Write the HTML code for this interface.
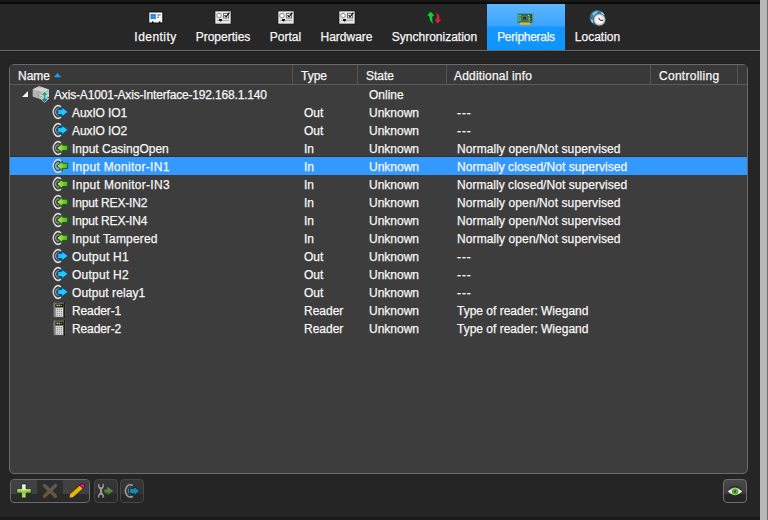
<!DOCTYPE html>
<html><head><meta charset="utf-8">
<style>
html,body{margin:0;padding:0;}
body{width:768px;height:520px;overflow:hidden;position:relative;background:#252525;font-family:"Liberation Sans",sans-serif;font-size:12px;color:#f6f6f6;-webkit-text-stroke:0.25px #f6f6f6;}
.abs{position:absolute;}
#topstrip{position:absolute;left:0;top:0;width:760px;height:4px;background:linear-gradient(#1e1e1e,#050505);}
#tabbar{position:absolute;left:0;top:4px;width:760px;height:46px;background:#272727;}
#tabline{position:absolute;left:0;top:50px;width:760px;height:1px;background:#6a6a6a;}
#tabline2{position:absolute;left:0;top:51px;width:760px;height:1px;background:#1f1f1f;}
#rstrip{position:absolute;left:760px;top:0;width:7px;height:520px;background:#b8b8b8;}
#rstrip2{position:absolute;left:767px;top:0;width:1px;height:520px;background:#6e6e6e;}
#bstrip{position:absolute;left:0;top:517px;width:760px;height:3px;background:#1a1a1a;}
.tab{position:absolute;top:4px;height:46px;}
.tsel{background:linear-gradient(#5db6ff 0px,#3aa4ff 22px,#1496ff 23px,#0f95ff 46px);}
.tic{position:absolute;left:50%;margin-left:-9px;top:5px;overflow:visible;}
.tl{position:absolute;left:0;right:0;top:24px;line-height:18px;text-align:center;white-space:nowrap;}
#panel{position:absolute;left:9px;top:64px;width:737px;height:408px;border:1px solid #6a6a6a;border-radius:5px;background:#3d3d3d;overflow:hidden;}
#panelshadow{position:absolute;left:9px;top:63px;width:739px;height:1px;background:#1f1f1f;}
#hdr{position:absolute;left:10px;top:65px;width:737px;height:19px;background:#393939;}
#hdrline{position:absolute;left:10px;top:84px;width:737px;height:1px;background:#5a5a5a;}
.sep{position:absolute;top:65px;width:1px;height:19px;background:#555;}
.t{position:absolute;line-height:18px;white-space:nowrap;}
.row{position:absolute;left:10px;width:737px;height:18px;}
.row.sel{background:#3399ff;box-shadow:0 -1px 0 #33302c;}
.ic{position:absolute;overflow:visible;}
.tri{position:absolute;left:22px;width:0;height:0;border-left:6px solid transparent;border-bottom:6px solid #f4f4f4;}
.btn{position:absolute;top:479px;width:22px;height:22px;border:1px solid #474747;border-radius:4px;background:linear-gradient(#363636 0,#333 14px,#292929 14px,#292929 22px);}
</style></head><body>
<svg width="0" height="0" style="position:absolute">
<defs>
  <linearGradient id="gBlue" x1="0" y1="0" x2="1" y2="1"><stop offset="0" stop-color="#10b8e8"/><stop offset="1" stop-color="#30dcf8"/></linearGradient>
  <linearGradient id="gGreen" x1="0" y1="0" x2="1" y2="0"><stop offset="0" stop-color="#c4ec60"/><stop offset="1" stop-color="#4cb024"/></linearGradient>
  <g id="i-c">
    <path d="M9.9 3 A4.51 6.3 0 1 0 9.9 13" fill="none" stroke="#dadada" stroke-width="1.8"/>
    <path d="M9.1 4.6 A3.3 4.6 0 1 0 9.1 11.4" fill="none" stroke="#484848" stroke-width="1.1"/>
    <path d="M8.6 5.8 A2.3 3.2 0 1 0 8.6 10.2" fill="none" stroke="#b8b8b8" stroke-width="0.9"/>
  </g>
  <g id="i-out">
    
    <path d="M9.9 3 A4.51 6.3 0 1 0 9.9 13" fill="none" stroke="#dadada" stroke-width="1.8"/>
    <path d="M9.1 4.6 A3.3 4.6 0 1 0 9.1 11.4" fill="none" stroke="#484848" stroke-width="1.1"/>
    <path d="M8.6 5.8 A2.3 3.2 0 1 0 8.6 10.2" fill="none" stroke="#b8b8b8" stroke-width="0.9"/>
  
    <path d="M6.7 5.4 H10.9 V3.1 L16.9 7.9 L10.9 12.7 V10.5 H6.7 Z" fill="url(#gBlue)" stroke="#0a4aa0" stroke-width="1" stroke-linejoin="round"/>
  </g>
  <g id="i-in">
    
    <path d="M9.9 3 A4.51 6.3 0 1 0 9.9 13" fill="none" stroke="#dadada" stroke-width="1.8"/>
    <path d="M9.1 4.6 A3.3 4.6 0 1 0 9.1 11.4" fill="none" stroke="#484848" stroke-width="1.1"/>
    <path d="M8.6 5.8 A2.3 3.2 0 1 0 8.6 10.2" fill="none" stroke="#b8b8b8" stroke-width="0.9"/>
  
    <path d="M16.7 5.2 H11.5 V3.2 L5.8 7.95 L11.5 12.7 V10.4 H16.7 Z" fill="url(#gGreen)" stroke="#1e6010" stroke-width="1" stroke-linejoin="round"/>
  </g>
  <g id="i-rdr">
    <linearGradient id="gRb" x1="0" y1="0" x2="1" y2="0"><stop offset="0" stop-color="#8a8a8a"/><stop offset=".3" stop-color="#5a5a5a"/><stop offset="1" stop-color="#6a6a6a"/></linearGradient>
    <rect x="2.6" y="0.6" width="10.6" height="14.6" rx="0.8" fill="url(#gRb)"/>
    <rect x="12.8" y="0.4" width="1.3" height="15" fill="#151515"/>
    <path d="M14.3 1.4 V14" stroke="#707070" stroke-width="0.5"/>
    <rect x="4.4" y="2.2" width="8" height="2.6" fill="#0c0c0c"/>
    <g fill="#90e040"><ellipse cx="6.2" cy="3.4" rx="1" ry=".8"/><ellipse cx="8.3" cy="3.4" rx="1" ry=".8"/><ellipse cx="10.4" cy="3.4" rx=".9" ry=".7" fill="#60a030"/></g>
    <rect x="4.6" y="5.8" width="7.4" height="9" fill="#dadada"/>
    <g fill="#8a8a8a"><circle cx="6.2" cy="7.4" r=".65"/><circle cx="8.3" cy="7.4" r=".65"/><circle cx="10.4" cy="7.4" r=".65"/>
    <circle cx="6.2" cy="9.4" r=".65"/><circle cx="8.3" cy="9.4" r=".65"/><circle cx="10.4" cy="9.4" r=".65"/>
    <circle cx="6.2" cy="11.4" r=".65"/><circle cx="8.3" cy="11.4" r=".65"/><circle cx="10.4" cy="11.4" r=".65"/>
    <circle cx="6.2" cy="13.4" r=".65"/><circle cx="8.3" cy="13.4" r=".65"/><circle cx="10.4" cy="13.4" r=".65"/></g>
  </g>
  <g id="i-dev">
    <linearGradient id="gDA" x1="0" y1="0" x2="0" y2="1"><stop offset="0" stop-color="#10a040"/><stop offset=".5" stop-color="#38b0a0"/><stop offset="1" stop-color="#0848b0"/></linearGradient>
    <path d="M0.8 3.2 L7 0.2 L17 3.4 L17 10.8 L10.6 13.8 L0.8 10.4 Z" fill="#a8a8a8"/>
    <path d="M0.8 3.2 L7 0.2 L17 3.4 L10.6 6.4 Z" fill="#d4d4d4"/>
    <path d="M10.6 6.4 L17 3.4 L17 10.8 L10.6 13.8 Z" fill="#c0c0c0"/>
    <path d="M0.8 3.2 L10.6 6.4 L10.6 13.8 L0.8 10.4 Z" fill="#b4b4b4"/>
    <path d="M4.4 2.2 L10.4 0.9" stroke="#9a9a9a" stroke-width="0.5"/>
    <path d="M6.2 4.8 L6.2 12" stroke="#989898" stroke-width="0.6"/>
    <path d="M12.6 5.4 L16.8 9.4 L14 9.4 L14 12.4 L16.8 12.4 L12.6 16.4 L8.4 12.4 L11.2 12.4 L11.2 9.4 L8.4 9.4 Z" fill="url(#gDA)" stroke="#f0f0f0" stroke-width="0.7" stroke-linejoin="round"/>
  </g>
  <g id="i-prop">
    <rect x="1" y="2" width="16" height="13" fill="#e6e6e6" stroke="#111" stroke-width="0.6"/>
    <circle cx="5" cy="6.6" r="2.3" fill="#f8f8f8" stroke="#808080" stroke-width="0.9"/>
    <rect x="9.6" y="4.4" width="5" height="4.6" fill="#f4f4f4" stroke="#555" stroke-width="0.8"/>
    <path d="M10.6 6.2 L12 7.8 L15.4 3.6" fill="none" stroke="#111" stroke-width="1.2"/>
    <path d="M3 11.4 H15" stroke="#999" stroke-width="0.9"/>
    <path d="M5 10 H8 V11.4 L6.5 12.8 L5 11.4 Z" fill="#111"/>
  </g>
  <g id="i-id">
    <path d="M1.8 3 H15.8 V14 H13.6 L12.6 12.8 L11.6 14 H6.6 L5.6 12.8 L4.6 14 H1.8 Z" fill="#f6f6f6" stroke="#0a0a0a" stroke-width="0.9"/>
    <rect x="3.6" y="5" width="5.2" height="5" fill="#1a84e0"/>
    <path d="M3.6 7.5 H8.8 M6.2 5 V10" stroke="#5aa8f0" stroke-width="0.4"/>
    <path d="M10.2 6 H13.6 M10.2 8.2 H12" stroke="#333" stroke-width="0.8"/>
    <path d="M5.6 12.4 V14.4 M12.6 12.4 V14.4" stroke="#111" stroke-width="1.2"/>
  </g>
  <g id="i-sync">
    <path d="M4.6 2.8 L1.2 6.6 L3.2 6.9 L3.9 11 L6.8 15 L6.2 9.8 L6.6 6.9 L8.4 6.6 Z" fill="#10d030"/>
    <path d="M9.8 2.8 L11.2 7.2 L9.8 10.8 L8.8 11 L11.6 14.6 L15.2 10.8 L13.4 10.6 L13.2 6.6 Z" fill="#d81e34"/>
  </g>
  <g id="i-per">
    <rect x="0.6" y="5" width="14.6" height="8.4" fill="#2a7a42" stroke="#1a4a28" stroke-width="0.5"/>
    <rect x="0.4" y="5" width="1.2" height="8.4" fill="#48c0c0"/>
    <rect x="5.4" y="7.2" width="4.4" height="3.8" fill="#3a3434" stroke="#8a8a8a" stroke-width="0.5"/>
    <g fill="#e8e8e8"><rect x="2.4" y="6.2" width="1.2" height="1"/><rect x="2.4" y="8.4" width="1.2" height="1"/><rect x="2.4" y="10.6" width="1.2" height="1"/><rect x="11" y="6.2" width="1.2" height="1"/><rect x="11.6" y="8.8" width="1.2" height="1"/><rect x="11.6" y="10.6" width="1.2" height="1"/></g>
    <g fill="#1a3a20"><rect x="13.6" y="6" width="1.2" height="1.2"/><rect x="13.6" y="8" width="1.2" height="1.2"/><rect x="13.6" y="10" width="1.2" height="1.2"/></g>
    <rect x="3" y="13.4" width="10" height="2.4" fill="#f0b020"/>
    <path d="M16 16 V4.4 L17 3.4" fill="none" stroke="#8a8a8a" stroke-width="1.1"/>
  </g>
  <g id="i-loc">
    <radialGradient id="gGlobe" cx=".4" cy=".35" r=".65"><stop offset="0" stop-color="#5aa0c0"/><stop offset=".55" stop-color="#24709a"/><stop offset="1" stop-color="#103a68"/></radialGradient>
    <radialGradient id="gClock" cx=".45" cy=".45" r=".6"><stop offset="0" stop-color="#ffffff"/><stop offset=".7" stop-color="#eeeeee"/><stop offset="1" stop-color="#a8a8a8"/></radialGradient>
    <circle cx="8.55" cy="8.95" r="7.9" fill="url(#gGlobe)"/>
    <path d="M3 5 Q5.4 2 9.4 2 Q8 4 4.6 6.4 Z" fill="#a8d0e0" opacity=".8"/>
    <path d="M11.6 2.4 Q14.6 3.6 15.6 6.2 L12.6 5.4 Z" fill="#c0e4d8"/>
    <path d="M1.4 10 Q2 13 4.4 14.6 L4.2 11 Z" fill="#a0d0b0"/>
    <circle cx="10.5" cy="10.8" r="6" fill="#cfcfcf" stroke="#4a4a4a" stroke-width="0.6"/>
    <circle cx="10.7" cy="11" r="4.9" fill="url(#gClock)"/>
    <path d="M9.6 8.8 L11 11.2 L14.2 11.4" fill="none" stroke="#111" stroke-width="0.9"/>
  </g>
</defs>
</svg>
<div id="topstrip"></div>
<div id="tabbar"></div>
<div class="tab" style="left:125px;width:61px"><svg class="tic" width="18" height="16" viewBox="0 0 18 16">
    <path d="M1.8 3 H15.8 V14 H13.6 L12.6 12.8 L11.6 14 H6.6 L5.6 12.8 L4.6 14 H1.8 Z" fill="#f6f6f6" stroke="#0a0a0a" stroke-width="0.9"/>
    <rect x="3.6" y="5" width="5.2" height="5" fill="#1a84e0"/>
    <path d="M3.6 7.5 H8.8 M6.2 5 V10" stroke="#5aa8f0" stroke-width="0.4"/>
    <path d="M10.2 6 H13.6 M10.2 8.2 H12" stroke="#333" stroke-width="0.8"/>
    <path d="M5.6 12.4 V14.4 M12.6 12.4 V14.4" stroke="#111" stroke-width="1.2"/>
  </svg><div class="tl" style="letter-spacing:0.45px">Identity</div></div>
<div class="tab" style="left:186px;width:74px"><svg class="tic" width="18" height="16" viewBox="0 0 18 16">
    <rect x="1" y="2" width="16" height="13" fill="#e6e6e6" stroke="#111" stroke-width="0.6"/>
    <circle cx="5" cy="6.6" r="2.3" fill="#f8f8f8" stroke="#808080" stroke-width="0.9"/>
    <rect x="9.6" y="4.4" width="5" height="4.6" fill="#f4f4f4" stroke="#555" stroke-width="0.8"/>
    <path d="M10.6 6.2 L12 7.8 L15.4 3.6" fill="none" stroke="#111" stroke-width="1.2"/>
    <path d="M3 11.4 H15" stroke="#999" stroke-width="0.9"/>
    <path d="M5 10 H8 V11.4 L6.5 12.8 L5 11.4 Z" fill="#111"/>
  </svg><div class="tl">Properties</div></div>
<div class="tab" style="left:260px;width:51px"><svg class="tic" width="18" height="16" viewBox="0 0 18 16">
    <rect x="1" y="2" width="16" height="13" fill="#e6e6e6" stroke="#111" stroke-width="0.6"/>
    <circle cx="5" cy="6.6" r="2.3" fill="#f8f8f8" stroke="#808080" stroke-width="0.9"/>
    <rect x="9.6" y="4.4" width="5" height="4.6" fill="#f4f4f4" stroke="#555" stroke-width="0.8"/>
    <path d="M10.6 6.2 L12 7.8 L15.4 3.6" fill="none" stroke="#111" stroke-width="1.2"/>
    <path d="M3 11.4 H15" stroke="#999" stroke-width="0.9"/>
    <path d="M5 10 H8 V11.4 L6.5 12.8 L5 11.4 Z" fill="#111"/>
  </svg><div class="tl">Portal</div></div>
<div class="tab" style="left:311px;width:71px"><svg class="tic" width="18" height="16" viewBox="0 0 18 16">
    <rect x="1" y="2" width="16" height="13" fill="#e6e6e6" stroke="#111" stroke-width="0.6"/>
    <circle cx="5" cy="6.6" r="2.3" fill="#f8f8f8" stroke="#808080" stroke-width="0.9"/>
    <rect x="9.6" y="4.4" width="5" height="4.6" fill="#f4f4f4" stroke="#555" stroke-width="0.8"/>
    <path d="M10.6 6.2 L12 7.8 L15.4 3.6" fill="none" stroke="#111" stroke-width="1.2"/>
    <path d="M3 11.4 H15" stroke="#999" stroke-width="0.9"/>
    <path d="M5 10 H8 V11.4 L6.5 12.8 L5 11.4 Z" fill="#111"/>
  </svg><div class="tl">Hardware</div></div>
<div class="tab" style="left:382px;width:105px"><svg class="tic" width="18" height="16" viewBox="0 0 18 16">
    <path d="M4.6 2.8 L1.2 6.6 L3.2 6.9 L3.9 11 L6.8 15 L6.2 9.8 L6.6 6.9 L8.4 6.6 Z" fill="#10d030"/>
    <path d="M9.8 2.8 L11.2 7.2 L9.8 10.8 L8.8 11 L11.6 14.6 L15.2 10.8 L13.4 10.6 L13.2 6.6 Z" fill="#d81e34"/>
  </svg><div class="tl">Synchronization</div></div>
<div class="tab tsel" style="left:487px;width:78px"><svg class="tic" width="18" height="16" viewBox="0 0 18 16">
    <rect x="0.6" y="5" width="14.6" height="8.4" fill="#2a7a42" stroke="#1a4a28" stroke-width="0.5"/>
    <rect x="0.4" y="5" width="1.2" height="8.4" fill="#48c0c0"/>
    <rect x="5.4" y="7.2" width="4.4" height="3.8" fill="#3a3434" stroke="#8a8a8a" stroke-width="0.5"/>
    <g fill="#e8e8e8"><rect x="2.4" y="6.2" width="1.2" height="1"/><rect x="2.4" y="8.4" width="1.2" height="1"/><rect x="2.4" y="10.6" width="1.2" height="1"/><rect x="11" y="6.2" width="1.2" height="1"/><rect x="11.6" y="8.8" width="1.2" height="1"/><rect x="11.6" y="10.6" width="1.2" height="1"/></g>
    <g fill="#1a3a20"><rect x="13.6" y="6" width="1.2" height="1.2"/><rect x="13.6" y="8" width="1.2" height="1.2"/><rect x="13.6" y="10" width="1.2" height="1.2"/></g>
    <rect x="3" y="13.4" width="10" height="2.4" fill="#f0b020"/>
    <path d="M16 16 V4.4 L17 3.4" fill="none" stroke="#8a8a8a" stroke-width="1.1"/>
  </svg><div class="tl" style="letter-spacing:-0.27px">Peripherals</div></div>
<div class="tab" style="left:565px;width:65px"><svg class="tic" width="18" height="16" viewBox="0 0 18 16">
    <radialGradient id="gGlobe" cx=".4" cy=".35" r=".65"><stop offset="0" stop-color="#5aa0c0"/><stop offset=".55" stop-color="#24709a"/><stop offset="1" stop-color="#103a68"/></radialGradient>
    <radialGradient id="gClock" cx=".45" cy=".45" r=".6"><stop offset="0" stop-color="#ffffff"/><stop offset=".7" stop-color="#eeeeee"/><stop offset="1" stop-color="#a8a8a8"/></radialGradient>
    <circle cx="8.55" cy="8.95" r="7.9" fill="url(#gGlobe)"/>
    <path d="M3 5 Q5.4 2 9.4 2 Q8 4 4.6 6.4 Z" fill="#a8d0e0" opacity=".8"/>
    <path d="M11.6 2.4 Q14.6 3.6 15.6 6.2 L12.6 5.4 Z" fill="#c0e4d8"/>
    <path d="M1.4 10 Q2 13 4.4 14.6 L4.2 11 Z" fill="#a0d0b0"/>
    <circle cx="10.5" cy="10.8" r="6" fill="#cfcfcf" stroke="#4a4a4a" stroke-width="0.6"/>
    <circle cx="10.7" cy="11" r="4.9" fill="url(#gClock)"/>
    <path d="M9.6 8.8 L11 11.2 L14.2 11.4" fill="none" stroke="#111" stroke-width="0.9"/>
  </svg><div class="tl">Location</div></div>
<div id="tabline"></div>
<div id="tabline2"></div>

<div id="panelshadow"></div>
<div id="panel"></div>
<div id="hdr"></div>
<div id="hdrline"></div>
<div class="sep" style="left:292px"></div>
<div class="sep" style="left:357px"></div>
<div class="sep" style="left:446px"></div>
<div class="sep" style="left:650px"></div>
<div class="sep" style="left:737px"></div>
<div class="t" style="left:18px;top:67px">Name</div>
<svg class="ic" style="left:53px;top:72px" width="9" height="6" viewBox="0 0 9 6"><path d="M0.8 5.2 L4.5 1 L8.2 5.2 Z" fill="#1a9cf4"/></svg>
<div class="t" style="left:301px;top:67px">Type</div>
<div class="t" style="left:366px;top:67px">State</div>
<div class="t" style="left:454px;top:67px;letter-spacing:0.18px">Additional info</div>
<div class="t" style="left:659px;top:67px;letter-spacing:0.27px">Controlling</div>

<div class="row" style="top:85px"></div>
<div class="tri" style="top:91px"></div>
<svg class="ic" style="left:32px;top:86px" width="18" height="18" viewBox="0 0 18 18">
    <linearGradient id="gDA" x1="0" y1="0" x2="0" y2="1"><stop offset="0" stop-color="#10a040"/><stop offset=".5" stop-color="#38b0a0"/><stop offset="1" stop-color="#0848b0"/></linearGradient>
    <path d="M0.8 3.2 L7 0.2 L17 3.4 L17 10.8 L10.6 13.8 L0.8 10.4 Z" fill="#a8a8a8"/>
    <path d="M0.8 3.2 L7 0.2 L17 3.4 L10.6 6.4 Z" fill="#d4d4d4"/>
    <path d="M10.6 6.4 L17 3.4 L17 10.8 L10.6 13.8 Z" fill="#c0c0c0"/>
    <path d="M0.8 3.2 L10.6 6.4 L10.6 13.8 L0.8 10.4 Z" fill="#b4b4b4"/>
    <path d="M4.4 2.2 L10.4 0.9" stroke="#9a9a9a" stroke-width="0.5"/>
    <path d="M6.2 4.8 L6.2 12" stroke="#989898" stroke-width="0.6"/>
    <path d="M12.6 5.4 L16.8 9.4 L14 9.4 L14 12.4 L16.8 12.4 L12.6 16.4 L8.4 12.4 L11.2 12.4 L11.2 9.4 L8.4 9.4 Z" fill="url(#gDA)" stroke="#f0f0f0" stroke-width="0.7" stroke-linejoin="round"/>
  </svg>
<div class="t" style="left:54px;top:86px;letter-spacing:-0.17px">Axis-A1001-Axis-Interface-192.168.1.140</div>
<div class="t" style="left:369px;top:86px">Online</div>
<div class="row" style="top:103px"></div>
<svg class="ic" style="left:51px;top:104px" width="18" height="16" viewBox="0 0 18 16">
    
    <path d="M9.9 3 A4.51 6.3 0 1 0 9.9 13" fill="none" stroke="#dadada" stroke-width="1.8"/>
    <path d="M9.1 4.6 A3.3 4.6 0 1 0 9.1 11.4" fill="none" stroke="#484848" stroke-width="1.1"/>
    <path d="M8.6 5.8 A2.3 3.2 0 1 0 8.6 10.2" fill="none" stroke="#b8b8b8" stroke-width="0.9"/>
  
    <path d="M6.7 5.4 H10.9 V3.1 L16.9 7.9 L10.9 12.7 V10.5 H6.7 Z" fill="url(#gBlue)" stroke="#0a4aa0" stroke-width="1" stroke-linejoin="round"/>
  </svg>
<div class="t" style="left:72px;top:104px;letter-spacing:-0.1px">AuxIO IO1</div>
<div class="t" style="left:304px;top:104px">Out</div>
<div class="t" style="left:369px;top:104px">Unknown</div>
<div class="t" style="left:457px;top:104px;letter-spacing:0.9px">---</div>
<div class="row" style="top:121px"></div>
<svg class="ic" style="left:51px;top:122px" width="18" height="16" viewBox="0 0 18 16">
    
    <path d="M9.9 3 A4.51 6.3 0 1 0 9.9 13" fill="none" stroke="#dadada" stroke-width="1.8"/>
    <path d="M9.1 4.6 A3.3 4.6 0 1 0 9.1 11.4" fill="none" stroke="#484848" stroke-width="1.1"/>
    <path d="M8.6 5.8 A2.3 3.2 0 1 0 8.6 10.2" fill="none" stroke="#b8b8b8" stroke-width="0.9"/>
  
    <path d="M6.7 5.4 H10.9 V3.1 L16.9 7.9 L10.9 12.7 V10.5 H6.7 Z" fill="url(#gBlue)" stroke="#0a4aa0" stroke-width="1" stroke-linejoin="round"/>
  </svg>
<div class="t" style="left:72px;top:122px;letter-spacing:-0.1px">AuxIO IO2</div>
<div class="t" style="left:304px;top:122px">Out</div>
<div class="t" style="left:369px;top:122px">Unknown</div>
<div class="t" style="left:457px;top:122px;letter-spacing:0.9px">---</div>
<div class="row" style="top:139px"></div>
<svg class="ic" style="left:51px;top:140px" width="18" height="16" viewBox="0 0 18 16">
    
    <path d="M9.9 3 A4.51 6.3 0 1 0 9.9 13" fill="none" stroke="#dadada" stroke-width="1.8"/>
    <path d="M9.1 4.6 A3.3 4.6 0 1 0 9.1 11.4" fill="none" stroke="#484848" stroke-width="1.1"/>
    <path d="M8.6 5.8 A2.3 3.2 0 1 0 8.6 10.2" fill="none" stroke="#b8b8b8" stroke-width="0.9"/>
  
    <path d="M16.7 5.2 H11.5 V3.2 L5.8 7.95 L11.5 12.7 V10.4 H16.7 Z" fill="url(#gGreen)" stroke="#1e6010" stroke-width="1" stroke-linejoin="round"/>
  </svg>
<div class="t" style="left:72px;top:140px">Input CasingOpen</div>
<div class="t" style="left:304px;top:140px">In</div>
<div class="t" style="left:369px;top:140px">Unknown</div>
<div class="t" style="left:457px;top:140px;letter-spacing:0.1px">Normally open/Not supervised</div>
<div class="row sel" style="top:157px"></div>
<svg class="ic" style="left:51px;top:158px" width="18" height="16" viewBox="0 0 18 16">
    
    <path d="M9.9 3 A4.51 6.3 0 1 0 9.9 13" fill="none" stroke="#dadada" stroke-width="1.8"/>
    <path d="M9.1 4.6 A3.3 4.6 0 1 0 9.1 11.4" fill="none" stroke="#484848" stroke-width="1.1"/>
    <path d="M8.6 5.8 A2.3 3.2 0 1 0 8.6 10.2" fill="none" stroke="#b8b8b8" stroke-width="0.9"/>
  
    <path d="M16.7 5.2 H11.5 V3.2 L5.8 7.95 L11.5 12.7 V10.4 H16.7 Z" fill="url(#gGreen)" stroke="#1e6010" stroke-width="1" stroke-linejoin="round"/>
  </svg>
<div class="t" style="left:72px;top:158px;letter-spacing:0.29px">Input Monitor-IN1</div>
<div class="t" style="left:304px;top:158px">In</div>
<div class="t" style="left:369px;top:158px">Unknown</div>
<div class="t" style="left:457px;top:158px;letter-spacing:0.05px">Normally closed/Not supervised</div>
<div class="row" style="top:175px"></div>
<svg class="ic" style="left:51px;top:176px" width="18" height="16" viewBox="0 0 18 16">
    
    <path d="M9.9 3 A4.51 6.3 0 1 0 9.9 13" fill="none" stroke="#dadada" stroke-width="1.8"/>
    <path d="M9.1 4.6 A3.3 4.6 0 1 0 9.1 11.4" fill="none" stroke="#484848" stroke-width="1.1"/>
    <path d="M8.6 5.8 A2.3 3.2 0 1 0 8.6 10.2" fill="none" stroke="#b8b8b8" stroke-width="0.9"/>
  
    <path d="M16.7 5.2 H11.5 V3.2 L5.8 7.95 L11.5 12.7 V10.4 H16.7 Z" fill="url(#gGreen)" stroke="#1e6010" stroke-width="1" stroke-linejoin="round"/>
  </svg>
<div class="t" style="left:72px;top:176px;letter-spacing:0.31px">Input Monitor-IN3</div>
<div class="t" style="left:304px;top:176px">In</div>
<div class="t" style="left:369px;top:176px">Unknown</div>
<div class="t" style="left:457px;top:176px;letter-spacing:0.05px">Normally closed/Not supervised</div>
<div class="row" style="top:193px"></div>
<svg class="ic" style="left:51px;top:194px" width="18" height="16" viewBox="0 0 18 16">
    
    <path d="M9.9 3 A4.51 6.3 0 1 0 9.9 13" fill="none" stroke="#dadada" stroke-width="1.8"/>
    <path d="M9.1 4.6 A3.3 4.6 0 1 0 9.1 11.4" fill="none" stroke="#484848" stroke-width="1.1"/>
    <path d="M8.6 5.8 A2.3 3.2 0 1 0 8.6 10.2" fill="none" stroke="#b8b8b8" stroke-width="0.9"/>
  
    <path d="M16.7 5.2 H11.5 V3.2 L5.8 7.95 L11.5 12.7 V10.4 H16.7 Z" fill="url(#gGreen)" stroke="#1e6010" stroke-width="1" stroke-linejoin="round"/>
  </svg>
<div class="t" style="left:72px;top:194px;letter-spacing:-0.16px">Input REX-IN2</div>
<div class="t" style="left:304px;top:194px">In</div>
<div class="t" style="left:369px;top:194px">Unknown</div>
<div class="t" style="left:457px;top:194px;letter-spacing:0.1px">Normally open/Not supervised</div>
<div class="row" style="top:211px"></div>
<svg class="ic" style="left:51px;top:212px" width="18" height="16" viewBox="0 0 18 16">
    
    <path d="M9.9 3 A4.51 6.3 0 1 0 9.9 13" fill="none" stroke="#dadada" stroke-width="1.8"/>
    <path d="M9.1 4.6 A3.3 4.6 0 1 0 9.1 11.4" fill="none" stroke="#484848" stroke-width="1.1"/>
    <path d="M8.6 5.8 A2.3 3.2 0 1 0 8.6 10.2" fill="none" stroke="#b8b8b8" stroke-width="0.9"/>
  
    <path d="M16.7 5.2 H11.5 V3.2 L5.8 7.95 L11.5 12.7 V10.4 H16.7 Z" fill="url(#gGreen)" stroke="#1e6010" stroke-width="1" stroke-linejoin="round"/>
  </svg>
<div class="t" style="left:72px;top:212px;letter-spacing:-0.16px">Input REX-IN4</div>
<div class="t" style="left:304px;top:212px">In</div>
<div class="t" style="left:369px;top:212px">Unknown</div>
<div class="t" style="left:457px;top:212px;letter-spacing:0.1px">Normally open/Not supervised</div>
<div class="row" style="top:229px"></div>
<svg class="ic" style="left:51px;top:230px" width="18" height="16" viewBox="0 0 18 16">
    
    <path d="M9.9 3 A4.51 6.3 0 1 0 9.9 13" fill="none" stroke="#dadada" stroke-width="1.8"/>
    <path d="M9.1 4.6 A3.3 4.6 0 1 0 9.1 11.4" fill="none" stroke="#484848" stroke-width="1.1"/>
    <path d="M8.6 5.8 A2.3 3.2 0 1 0 8.6 10.2" fill="none" stroke="#b8b8b8" stroke-width="0.9"/>
  
    <path d="M16.7 5.2 H11.5 V3.2 L5.8 7.95 L11.5 12.7 V10.4 H16.7 Z" fill="url(#gGreen)" stroke="#1e6010" stroke-width="1" stroke-linejoin="round"/>
  </svg>
<div class="t" style="left:72px;top:230px;letter-spacing:0.18px">Input Tampered</div>
<div class="t" style="left:304px;top:230px">In</div>
<div class="t" style="left:369px;top:230px">Unknown</div>
<div class="t" style="left:457px;top:230px;letter-spacing:0.1px">Normally open/Not supervised</div>
<div class="row" style="top:247px"></div>
<svg class="ic" style="left:51px;top:248px" width="18" height="16" viewBox="0 0 18 16">
    
    <path d="M9.9 3 A4.51 6.3 0 1 0 9.9 13" fill="none" stroke="#dadada" stroke-width="1.8"/>
    <path d="M9.1 4.6 A3.3 4.6 0 1 0 9.1 11.4" fill="none" stroke="#484848" stroke-width="1.1"/>
    <path d="M8.6 5.8 A2.3 3.2 0 1 0 8.6 10.2" fill="none" stroke="#b8b8b8" stroke-width="0.9"/>
  
    <path d="M6.7 5.4 H10.9 V3.1 L16.9 7.9 L10.9 12.7 V10.5 H6.7 Z" fill="url(#gBlue)" stroke="#0a4aa0" stroke-width="1" stroke-linejoin="round"/>
  </svg>
<div class="t" style="left:72px;top:248px;letter-spacing:0.25px">Output H1</div>
<div class="t" style="left:304px;top:248px">Out</div>
<div class="t" style="left:369px;top:248px">Unknown</div>
<div class="t" style="left:457px;top:248px;letter-spacing:0.9px">---</div>
<div class="row" style="top:265px"></div>
<svg class="ic" style="left:51px;top:266px" width="18" height="16" viewBox="0 0 18 16">
    
    <path d="M9.9 3 A4.51 6.3 0 1 0 9.9 13" fill="none" stroke="#dadada" stroke-width="1.8"/>
    <path d="M9.1 4.6 A3.3 4.6 0 1 0 9.1 11.4" fill="none" stroke="#484848" stroke-width="1.1"/>
    <path d="M8.6 5.8 A2.3 3.2 0 1 0 8.6 10.2" fill="none" stroke="#b8b8b8" stroke-width="0.9"/>
  
    <path d="M6.7 5.4 H10.9 V3.1 L16.9 7.9 L10.9 12.7 V10.5 H6.7 Z" fill="url(#gBlue)" stroke="#0a4aa0" stroke-width="1" stroke-linejoin="round"/>
  </svg>
<div class="t" style="left:72px;top:266px;letter-spacing:0.25px">Output H2</div>
<div class="t" style="left:304px;top:266px">Out</div>
<div class="t" style="left:369px;top:266px">Unknown</div>
<div class="t" style="left:457px;top:266px;letter-spacing:0.9px">---</div>
<div class="row" style="top:283px"></div>
<svg class="ic" style="left:51px;top:284px" width="18" height="16" viewBox="0 0 18 16">
    
    <path d="M9.9 3 A4.51 6.3 0 1 0 9.9 13" fill="none" stroke="#dadada" stroke-width="1.8"/>
    <path d="M9.1 4.6 A3.3 4.6 0 1 0 9.1 11.4" fill="none" stroke="#484848" stroke-width="1.1"/>
    <path d="M8.6 5.8 A2.3 3.2 0 1 0 8.6 10.2" fill="none" stroke="#b8b8b8" stroke-width="0.9"/>
  
    <path d="M6.7 5.4 H10.9 V3.1 L16.9 7.9 L10.9 12.7 V10.5 H6.7 Z" fill="url(#gBlue)" stroke="#0a4aa0" stroke-width="1" stroke-linejoin="round"/>
  </svg>
<div class="t" style="left:72px;top:284px;letter-spacing:0.1px">Output relay1</div>
<div class="t" style="left:304px;top:284px">Out</div>
<div class="t" style="left:369px;top:284px">Unknown</div>
<div class="t" style="left:457px;top:284px;letter-spacing:0.9px">---</div>
<div class="row" style="top:301px"></div>
<svg class="ic" style="left:51px;top:302px" width="18" height="16" viewBox="0 0 18 16">
    <linearGradient id="gRb" x1="0" y1="0" x2="1" y2="0"><stop offset="0" stop-color="#8a8a8a"/><stop offset=".3" stop-color="#5a5a5a"/><stop offset="1" stop-color="#6a6a6a"/></linearGradient>
    <rect x="2.6" y="0.6" width="10.6" height="14.6" rx="0.8" fill="url(#gRb)"/>
    <rect x="12.8" y="0.4" width="1.3" height="15" fill="#151515"/>
    <path d="M14.3 1.4 V14" stroke="#707070" stroke-width="0.5"/>
    <rect x="4.4" y="2.2" width="8" height="2.6" fill="#0c0c0c"/>
    <g fill="#90e040"><ellipse cx="6.2" cy="3.4" rx="1" ry=".8"/><ellipse cx="8.3" cy="3.4" rx="1" ry=".8"/><ellipse cx="10.4" cy="3.4" rx=".9" ry=".7" fill="#60a030"/></g>
    <rect x="4.6" y="5.8" width="7.4" height="9" fill="#dadada"/>
    <g fill="#8a8a8a"><circle cx="6.2" cy="7.4" r=".65"/><circle cx="8.3" cy="7.4" r=".65"/><circle cx="10.4" cy="7.4" r=".65"/>
    <circle cx="6.2" cy="9.4" r=".65"/><circle cx="8.3" cy="9.4" r=".65"/><circle cx="10.4" cy="9.4" r=".65"/>
    <circle cx="6.2" cy="11.4" r=".65"/><circle cx="8.3" cy="11.4" r=".65"/><circle cx="10.4" cy="11.4" r=".65"/>
    <circle cx="6.2" cy="13.4" r=".65"/><circle cx="8.3" cy="13.4" r=".65"/><circle cx="10.4" cy="13.4" r=".65"/></g>
  </svg>
<div class="t" style="left:72px;top:302px;letter-spacing:-0.12px">Reader-1</div>
<div class="t" style="left:304px;top:302px">Reader</div>
<div class="t" style="left:369px;top:302px">Unknown</div>
<div class="t" style="left:457px;top:302px">Type of reader: Wiegand</div>
<div class="row" style="top:319px"></div>
<svg class="ic" style="left:51px;top:320px" width="18" height="16" viewBox="0 0 18 16">
    <linearGradient id="gRb" x1="0" y1="0" x2="1" y2="0"><stop offset="0" stop-color="#8a8a8a"/><stop offset=".3" stop-color="#5a5a5a"/><stop offset="1" stop-color="#6a6a6a"/></linearGradient>
    <rect x="2.6" y="0.6" width="10.6" height="14.6" rx="0.8" fill="url(#gRb)"/>
    <rect x="12.8" y="0.4" width="1.3" height="15" fill="#151515"/>
    <path d="M14.3 1.4 V14" stroke="#707070" stroke-width="0.5"/>
    <rect x="4.4" y="2.2" width="8" height="2.6" fill="#0c0c0c"/>
    <g fill="#90e040"><ellipse cx="6.2" cy="3.4" rx="1" ry=".8"/><ellipse cx="8.3" cy="3.4" rx="1" ry=".8"/><ellipse cx="10.4" cy="3.4" rx=".9" ry=".7" fill="#60a030"/></g>
    <rect x="4.6" y="5.8" width="7.4" height="9" fill="#dadada"/>
    <g fill="#8a8a8a"><circle cx="6.2" cy="7.4" r=".65"/><circle cx="8.3" cy="7.4" r=".65"/><circle cx="10.4" cy="7.4" r=".65"/>
    <circle cx="6.2" cy="9.4" r=".65"/><circle cx="8.3" cy="9.4" r=".65"/><circle cx="10.4" cy="9.4" r=".65"/>
    <circle cx="6.2" cy="11.4" r=".65"/><circle cx="8.3" cy="11.4" r=".65"/><circle cx="10.4" cy="11.4" r=".65"/>
    <circle cx="6.2" cy="13.4" r=".65"/><circle cx="8.3" cy="13.4" r=".65"/><circle cx="10.4" cy="13.4" r=".65"/></g>
  </svg>
<div class="t" style="left:72px;top:320px;letter-spacing:-0.12px">Reader-2</div>
<div class="t" style="left:304px;top:320px">Reader</div>
<div class="t" style="left:369px;top:320px">Unknown</div>
<div class="t" style="left:457px;top:320px">Type of reader: Wiegand</div>

<!-- bottom buttons -->
<div style="position:absolute;left:10px;top:479px;width:78px;height:22px;border:1px solid #6a6a6a;border-radius:4px;overflow:hidden;background:#2a2a2a;">
  <div style="position:absolute;left:0;top:0;width:26px;height:14px;background:#414141"></div>
  <div style="position:absolute;left:26px;top:0;width:26px;height:14px;background:#2e2e2e"></div>
  <div style="position:absolute;left:52px;top:0;width:26px;height:14px;background:#414141"></div>
</div>
<svg class="ic" style="left:14px;top:482px" width="20" height="18" viewBox="0 0 20 18">
  <defs><linearGradient id="gPlus" x1="0" y1="0" x2="0" y2="1"><stop offset="0" stop-color="#f4faee"/><stop offset=".4" stop-color="#d8eec8"/><stop offset=".52" stop-color="#8cc838"/><stop offset="1" stop-color="#c0e468"/></linearGradient></defs>
  <path d="M7.6 1.9 H12.1 V6.8 H17.2 V11 H12.1 V15.9 H7.6 V11 H2.8 V6.8 H7.6 Z" fill="url(#gPlus)" stroke="#14240a" stroke-width="0.8" stroke-linejoin="round"/>
</svg>
<svg class="ic" style="left:40px;top:482px" width="20" height="18" viewBox="0 0 20 18">
  <defs><linearGradient id="gX" x1="0" y1="0" x2="0" y2="1"><stop offset="0" stop-color="#5c5a58"/><stop offset="1" stop-color="#6c5438"/></linearGradient></defs>
  <path d="M4.5 3.5 L15.5 14.2 M15.5 3.5 L4.5 14.2" stroke="url(#gX)" stroke-width="3.4" stroke-linecap="round"/>
</svg>
<svg class="ic" style="left:67px;top:482px" width="20" height="18" viewBox="0 0 20 18">
  <path d="M2 16 L3.4 11.6 L12.8 3.2 L16.2 6.6 L6.6 15 Z" fill="#f2c200" stroke="#1a1400" stroke-width="0.7" stroke-linejoin="round"/>
  <path d="M4.6 12.4 L13.6 4.4 M6 13.8 L15 5.8" stroke="#c89000" stroke-width="0.5"/>
  <path d="M12.8 3.2 L14 2 Q15.4 0.8 16.6 2 L17.2 2.6 Q18.4 3.8 17.4 5.2 L16.2 6.6 Z" fill="#e8108c" stroke="#1a0010" stroke-width="0.6"/>
  <path d="M2 16 L3.4 11.6 L6.6 15 Z" fill="#d8aa78"/>
  <path d="M2 16 L2.6 14.2 L3.8 15.4 Z" fill="#222"/>
</svg>
<div class="btn" style="left:94px"></div>
<div class="btn" style="left:120px"></div>
<svg class="ic" style="left:96px;top:482px" width="20" height="18" viewBox="0 0 20 18">
  <defs><linearGradient id="gWa" x1="0" y1="0" x2="0" y2="1"><stop offset="0" stop-color="#6c9c54"/><stop offset="1" stop-color="#346a1c"/></linearGradient></defs>
  <path d="M1.7 1.6 L3.6 1.6 L3.8 4.6 Q5 5.4 6.1 4.6 L6.3 1.6 L8.2 1.6 L8.2 4.4 Q8 6 6.4 7 L6.4 11 Q8 12 8.2 13.6 L8.2 15.9 L6.3 15.9 L6.1 13.4 Q5 12.6 3.8 13.4 L3.6 15.9 L1.7 15.9 L1.7 13.6 Q1.9 12 3.6 11 L3.6 7 Q1.9 6 1.7 4.4 Z" fill="#a2a2a2" stroke="#151515" stroke-width="0.5"/>
  <path d="M8.4 7.6 H11.4 V4.7 L17.2 9.1 L11.4 13.5 V10.8 H8.4 Z" fill="url(#gWa)"/>
</svg>
<svg class="ic" style="left:123px;top:482px" width="20" height="18" viewBox="0 0 20 18">
  <path d="M9.78 3.7 A4.66 6.2 0 1 0 9.78 14.1" fill="none" stroke="#a0a0a0" stroke-width="1.6"/>
  <path d="M8.99 5.12 A3.2 4.5 0 1 0 8.99 12.68" fill="none" stroke="#3c3c3c" stroke-width="1.1"/>
  <path d="M8.34 6.38 A2 3 0 1 0 8.34 11.42" fill="none" stroke="#8a8a8a" stroke-width="0.9"/>
  <path d="M6.6 6.4 H11.1 V4.4 L16.6 9 L11.1 13.6 V11.6 H6.6 Z" fill="#1a8aa4" stroke="#0a2a5a" stroke-width="0.9" stroke-linejoin="round"/>
</svg>
<div style="position:absolute;left:723px;top:479px;width:22px;height:22px;border:1px solid #6e6e6e;border-radius:4px;background:linear-gradient(#4a4a4a 0,#3c3c3c 14px,#262626 14px,#262626 22px);"></div>
<svg class="ic" style="left:726px;top:484px" width="18" height="14" viewBox="0 0 18 14">
  <ellipse cx="9" cy="5.6" rx="6.4" ry="4" fill="#2a2a2a" opacity=".7"/>
  <path d="M1.8 7.6 Q9 0 16.2 7.6 Q9 14.6 1.8 7.6 Z" fill="#ecece4"/>
  <circle cx="9" cy="7.5" r="3.7" fill="#b8e090"/>
  <circle cx="9" cy="7.5" r="3.1" fill="#48a828"/>
  <circle cx="9" cy="7.5" r="2" fill="#6cc040"/>
  <ellipse cx="9" cy="7.5" rx="0.8" ry="1.1" transform="rotate(35 9 7.5)" fill="#111"/>
</svg>

<div id="bstrip"></div>
<div id="rstrip"></div>
<div id="rstrip2"></div>
</body></html>
